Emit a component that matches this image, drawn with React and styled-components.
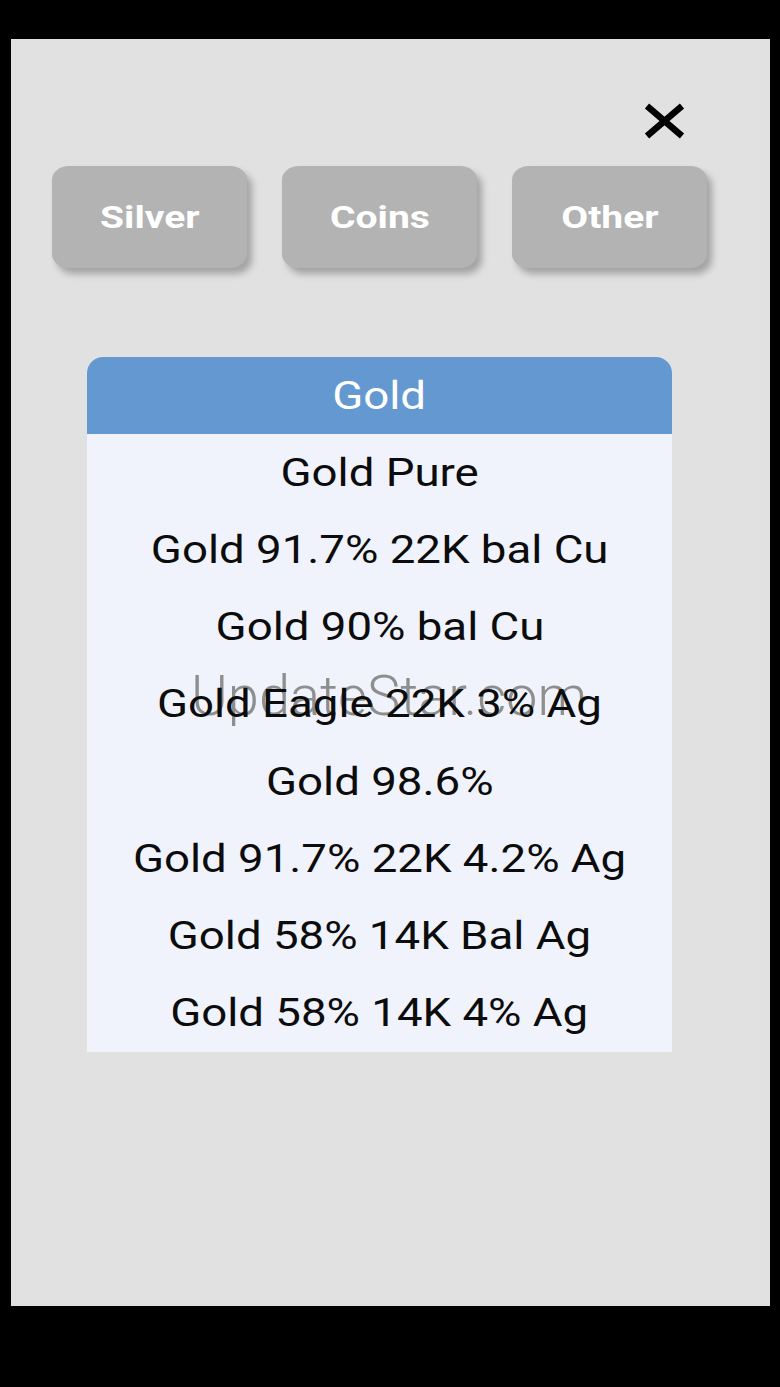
import React from "react";
import styled, { createGlobalStyle } from "styled-components";

const GlobalStyle = createGlobalStyle`
  html, body {
    margin: 0;
    padding: 0;
    background: #000;
  }
  body {
    font-family: Roboto, "Noto Sans", sans-serif;
  }
`;

const Screen = styled.div`
  margin: 39px 0 0 11px;
  width: 759px;
  height: 1267px;
  background: #e1e1e1;
  display: flex;
  flex-direction: column;
  padding-top: 64px;
  box-sizing: border-box;
`;

const CloseRow = styled.div`
  display: flex;
  justify-content: flex-end;
  padding-right: 85px;
  height: 36px;
`;

const CloseButton = styled.button`
  width: 41px;
  height: 36px;
  padding: 0;
  border: none;
  background: transparent;
  display: block;
  cursor: pointer;
`;

const TabRow = styled.div`
  display: flex;
  gap: 35px;
  margin-top: 27px;
  padding-left: 41px;
`;

const TabButton = styled.button`
  width: 195px;
  height: 102px;
  border: none;
  border-radius: 17px / 14px;
  background: #b3b3b3;
  box-shadow: 5px 6px 7px rgba(0, 0, 0, 0.28);
  display: flex;
  align-items: center;
  justify-content: center;
  padding: 0;
  cursor: pointer;
`;

const Stretch = styled.span`
  display: inline-block;
  transform: scaleX(${(p) => p.$sx || 1.2});
  white-space: nowrap;
`;

const TabLabel = styled(Stretch)`
  font-family: Roboto, sans-serif;
  font-weight: 700;
  font-size: 32px;
  color: #fff;
`;

const Card = styled.div`
  position: relative;
  margin: 89px 0 0 76px;
  width: 585px;
  background: #f0f3fc;
  border-radius: 16px 16px 0 0;
  overflow: hidden;
`;

const CardHeader = styled.div`
  height: 77px;
  background: #6399d0;
  display: flex;
  align-items: center;
  justify-content: center;
`;

const HeaderLabel = styled(Stretch)`
  font-size: 38px;
  font-weight: 400;
  color: #fff;
`;

const Row = styled.div`
  position: relative;
  z-index: 1;
  height: 77.25px;
  display: flex;
  align-items: center;
  justify-content: center;
`;

const RowLabel = styled(Stretch)`
  font-size: 38px;
  font-weight: 400;
  color: #0c0c0c;
`;

const Watermark = styled.div`
  position: absolute;
  z-index: 0;
  left: 104px;
  top: 311px;
  font-family: Roboto, sans-serif;
  font-size: 56px;
  line-height: 1;
  font-weight: 300;
  color: #8e8e8e;
  pointer-events: none;
  white-space: nowrap;
`;

const tabs = ["Silver", "Coins", "Other"];
const alloys = [
  "Gold Pure",
  "Gold 91.7% 22K bal Cu",
  "Gold 90% bal Cu",
  "Gold Eagle 22K 3% Ag",
  "Gold 98.6%",
  "Gold 91.7% 22K 4.2% Ag",
  "Gold 58% 14K Bal Ag",
  "Gold 58% 14K 4% Ag",
];

export default function App() {
  return (
    <>
      <GlobalStyle />
      <Screen>
        <CloseRow>
          <CloseButton aria-label="Close">
            <svg width="41" height="36" viewBox="0 0 41 36">
              <path
                d="M3 3 L38 33 M38 3 L3 33"
                stroke="#000"
                strokeWidth="6.5"
                strokeLinecap="butt"
                fill="none"
              />
            </svg>
          </CloseButton>
        </CloseRow>
        <TabRow>
          {tabs.map((t) => (
            <TabButton key={t}>
              <TabLabel $sx={1.22}>{t}</TabLabel>
            </TabButton>
          ))}
        </TabRow>
        <Card>
          <Watermark>UpdateStar.com</Watermark>
          <CardHeader>
            <HeaderLabel>Gold</HeaderLabel>
          </CardHeader>
          {alloys.map((a) => (
            <Row key={a}>
              <RowLabel>{a}</RowLabel>
            </Row>
          ))}
        </Card>
      </Screen>
    </>
  );
}
